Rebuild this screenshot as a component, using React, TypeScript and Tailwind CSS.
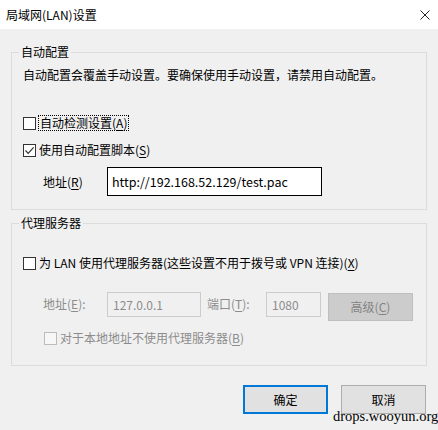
import React from 'react';

const font = { fontFamily: '"Noto Sans CJK SC", "Noto Sans", sans-serif' };

function Key({ k }: { k: string }) {
  return (
    <>
      (<span className="underline underline-offset-2">{k}</span>)
    </>
  );
}

function Checkbox({ checked = false, disabled = false }: { checked?: boolean; disabled?: boolean }) {
  return (
    <span
      className={`flex h-[13px] w-[13px] shrink-0 items-center justify-center border ${
        disabled ? 'border-[#bcbcbc] bg-[#f7f7f7]' : 'border-[#333333] bg-white'
      }`}
    >
      {checked && (
        <svg width="11" height="11" viewBox="0 0 11 11">
          <path d="M1.5 5.5 L4.2 8.3 L9.6 2.4" fill="none" stroke="#333333" strokeWidth="1.2" />
        </svg>
      )}
    </span>
  );
}

function Button({ label, k, primary = false }: { label: string; k: string; primary?: boolean }) {
  return (
    <button
      className={`flex h-[29px] w-[85px] items-center justify-center bg-[#e1e1e1] text-[12px] text-black ${
        primary ? 'border-2 border-[#0078d7]' : 'border border-[#adadad]'
      }`}
    >
      {label}
      {k && <Key k={k} />}
    </button>
  );
}

export default function App() {
  return (
    <div className="relative h-[430px] w-[438px] overflow-hidden bg-[#f0f0f0] text-[12px] leading-[16px] text-black" style={font}>
      {/* Title bar */}
      <div className="flex h-[29px] items-center justify-between bg-white pl-[6px] pr-[8px]">
        <span className="text-[12px]">局域网(LAN)设置</span>
        <svg width="10" height="10" viewBox="0 0 10 10">
          <path d="M0.5 0.5 L9.5 9.5 M9.5 0.5 L0.5 9.5" stroke="#222" strokeWidth="1" />
        </svg>
      </div>

      {/* 自动配置 */}
      <fieldset className="mx-[11px] mt-[15px] border border-[#dcdcdc] pb-[13px]">
        <legend className="ml-[7px] px-[2px] leading-[16px]">自动配置</legend>
        <p className="mt-[7px] pl-[11px]">自动配置会覆盖手动设置。要确保使用手动设置，请禁用自动配置。</p>

        <div className="mt-[32px] flex items-center pl-[11px]">
          <Checkbox />
          <span className="ml-[2px] border border-dotted border-black px-[1px] leading-[14px]">
            自动检测设置<Key k="A" />
          </span>
        </div>

        <div className="mt-[11px] flex items-center pl-[11px]">
          <Checkbox checked />
          <span className="ml-[3px]">
            使用自动配置脚本<Key k="S" />
          </span>
        </div>

        <div className="mt-[9px] flex items-center pl-[31px]">
          <span className="w-[64px]">
            地址<Key k="R" />
          </span>
          <div className="flex h-[29px] w-[215px] items-center border border-black bg-white pl-[4px] text-[12.5px]">
            http://192.168.52.129/test.pac
          </div>
        </div>
      </fieldset>

      {/* 代理服务器 */}
      <fieldset className="mx-[11px] mt-[5px] border border-[#dcdcdc] pb-[19px]">
        <legend className="ml-[7px] px-[2px] leading-[16px]">代理服务器</legend>

        <div className="mt-[24px] flex items-center pl-[11px]">
          <Checkbox />
          <span className="ml-[3px]">
            为 LAN 使用代理服务器(这些设置不用于拨号或 VPN 连接)<Key k="X" />
          </span>
        </div>

        <div className="mt-[21px] flex items-start pl-[31px] text-[#8c8c8c]">
          <span className="mt-[4px] w-[64px]">
            地址<Key k="E" />:
          </span>
          <div className="flex h-[25px] w-[94px] items-center border border-[#cccccc] pl-[5px]">127.0.0.1</div>
          <span className="ml-[6px] mt-[4px] w-[59px]">
            端口<Key k="T" />:
          </span>
          <div className="flex h-[25px] w-[55px] items-center border border-[#cccccc] pl-[5px]">1080</div>
          <div className="ml-[7px] mt-[1px] flex h-[28px] w-[85px] items-center justify-center border border-[#bfbfbf] bg-[#cccccc] text-[#838383]">
            高级<Key k="C" />
          </div>
        </div>

        <div className="mt-[9px] flex items-center pl-[32px] text-[#8c8c8c]">
          <Checkbox disabled />
          <span className="ml-[3px]">
            对于本地地址不使用代理服务器<Key k="B" />
          </span>
        </div>
      </fieldset>

      {/* Buttons */}
      <div className="mt-[19px] flex justify-end gap-[13px] pr-[12px]">
        <Button label="确定" k="" primary />
        <Button label="取消" k="" />
      </div>

      {/* Watermark */}
      <span
        className="absolute left-[333px] top-[407px] text-[14.5px] leading-[18px] text-black"
        style={{ fontFamily: '"Liberation Serif", serif' }}
      >
        drops.wooyun.org
      </span>
    </div>
  );
}
